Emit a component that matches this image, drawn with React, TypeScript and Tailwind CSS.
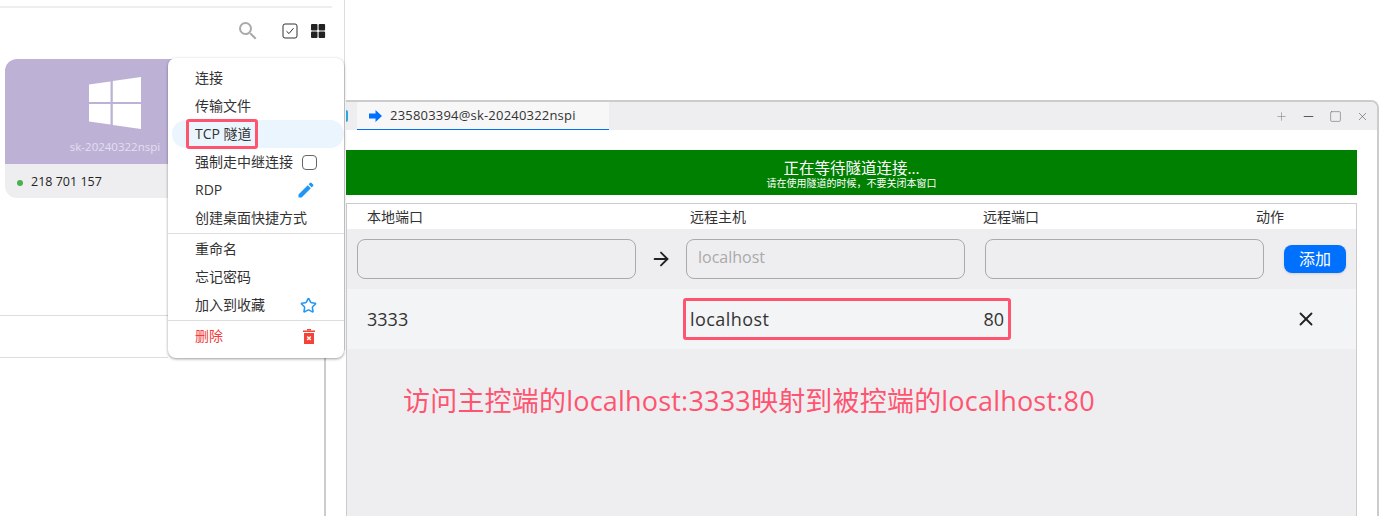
import React from 'react';
import { Plus, Minus, Square, X, ArrowRight, Star } from 'lucide-react';

const FONT = { fontFamily: '"Open Sans", "Noto Sans CJK SC", sans-serif' };

// Context menu item
const MenuItem: React.FC<{ label: string; right?: React.ReactNode; danger?: boolean }> = ({ label, right, danger }) => (
  <div className={`flex items-center justify-between pl-[27px] pr-[22px] h-[28px] text-sm ${danger ? 'text-[#f33c3c]' : 'text-[#333]'}`}>
    <span>{label}</span>
    {right}
  </div>
);

const WindowsLogo = () => (
  <svg width="52" height="52" viewBox="0 0 52 52" fill="white">
    <path d="M0 7.4 L21.5 4.4 V25 H0 Z" />
    <path d="M23.8 4 L52 0 V25 H23.8 Z" />
    <path d="M0 27 H21.5 V47.6 L0 44.6 Z" />
    <path d="M23.8 27 H52 V52 L23.8 48 Z" />
  </svg>
);

const PortInput: React.FC<{ placeholder?: string }> = ({ placeholder }) => (
  <div className="w-[279px] h-10 border border-[#aaa] rounded-lg flex items-center px-[11px] pb-[4px] text-base text-[#aaa]">
    {placeholder}
  </div>
);

export default function App() {
  return (
    <div className="relative w-[1385px] h-[516px] bg-white overflow-hidden" style={FONT}>
      {/* Address book panel */}
      <div className="w-[332px]">
        <div className="h-[8px] border-b-2 border-[#eeeeee]" />
        <div className="h-[51px] flex items-center justify-end pr-[6px] text-[#222]">
          <svg width="24" height="24" viewBox="0 0 24 24" fill="#aaaaaa" className="mr-[22px] mb-[6px]">
            <path d="M15.5 14h-.79l-.28-.27A6.471 6.471 0 0 0 16 9.5 6.5 6.5 0 1 0 9.5 16c1.61 0 3.09-.59 4.23-1.57l.27.28v.79l5 4.99L20.49 19l-4.99-5zm-6 0C7.01 14 5 11.99 5 9.5S7.01 5 9.5 5 14 7.01 14 9.5 11.99 14 9.5 14z" />
          </svg>
          <svg width="16" height="16" viewBox="0 0 16 16" fill="none" className="mr-[12px] mb-[6px]">
            <rect x="1" y="1" width="14" height="14" rx="2" stroke="#333" strokeWidth="1" />
            <path d="M4.5 8.2 L7 10.6 L11.5 5.2" stroke="#333" strokeWidth="1" />
          </svg>
          <svg width="16" height="16" viewBox="0 0 16 16" fill="#222" className="mb-[6px]">
            <rect x="1" y="1" width="6.5" height="6.5" rx="1" />
            <rect x="8.6" y="1" width="6.5" height="6.5" rx="1" />
            <rect x="1" y="8.6" width="6.5" height="6.5" rx="1" />
            <rect x="8.6" y="8.6" width="6.5" height="6.5" rx="1" />
          </svg>
        </div>
        <div className="ml-[5px] w-[220px] h-[139px] rounded-xl overflow-hidden flex flex-col">
          <div className="h-[105px] bg-[#bdb2d6] flex flex-col items-center pt-[18px]">
            <WindowsLogo />
            <span className="text-[11.5px] text-[#e4dfee] mt-[9px]">sk-20240322nspi</span>
          </div>
          <div className="flex-1 bg-[#eeeef0] flex items-center pl-[12px] pt-[3px] text-[12.5px] font-medium text-[#222]">
            <span className="w-[6px] h-[6px] rounded-full bg-[#4caf50] mr-[8px]" />
            218 701 157
          </div>
        </div>
        <div className="mt-[117px] border-t border-[#ddd] h-[43px] w-[168px] border-b" />
      </div>
      <div className="absolute left-[324px] top-[358px] bottom-0 w-[2px] bg-[#ccc]" />
      <div className="absolute left-[344px] top-0 h-[350px] w-px bg-[#ddd]" />

      {/* Tunnel window */}
      <div className="absolute left-[346px] top-[100px] w-[1033px] h-[416px] border-t-2 border-r-2 border-[#cccccc] rounded-tr-lg bg-white flex flex-col overflow-hidden">
        <div className="h-[28px] bg-[#eeeef0] flex items-stretch">
          <div className="w-[2px] h-[12px] mt-[8px] rounded-r-full bg-[#29a8e0] mr-[9px]" />
          <div className="w-[252px] bg-[#f7f7f8] border-b border-[#0071ff] flex items-center pl-[12px] text-[13px] tracking-[0.2px] text-[#333]">
            <svg width="13" height="12" viewBox="0 0 13 12" fill="#0071ff" className="mr-[8px]">
              <path d="M0 3.5 H6.5 V0 L13 6 L6.5 12 V8.5 H0 Z" />
            </svg>
            235803394@sk-20240322nspi
          </div>
          <div className="ml-auto flex items-center text-[#777] pr-[8px]">
            <Plus size={13} strokeWidth={1} />
            <Minus size={15} strokeWidth={1.4} className="text-[#444] ml-[13px]" />
            <Square size={13} strokeWidth={1.2} className="ml-[13px]" />
            <X size={13} strokeWidth={1.1} className="ml-[14px] text-[#555]" />
          </div>
        </div>
        <div className="flex-1 flex flex-col pr-[20px] pt-[20px]">
          <div className="h-[45px] bg-[#008000] text-white flex flex-col items-center pt-[9px] shrink-0">
            <div className="text-[15.5px] leading-[18px]">正在等待隧道连接...</div>
            <div className="text-[10px] leading-[11px] mt-[1px]">请在使用隧道的时候，不要关闭本窗口</div>
          </div>
          <div className="mt-[8px] flex-1 border-t border-l border-r border-[#cccccc] bg-[#eeeef0] flex flex-col text-[#333]">
            <div className="h-[25px] bg-white flex items-center text-sm">
              <span className="ml-[20px] w-[323px]">本地端口</span>
              <span className="w-[293px]">远程主机</span>
              <span className="w-[273px]">远程端口</span>
              <span>动作</span>
            </div>
            <div className="h-[60px] flex items-center pl-[10px]">
              <PortInput />
              <div className="w-[50px] flex justify-center text-[#222]">
                <ArrowRight size={22} strokeWidth={2} />
              </div>
              <PortInput placeholder="localhost" />
              <div className="w-[20px]" />
              <PortInput />
              <div className="ml-[20px] w-[62px] h-[28px] rounded-lg bg-[#0071ff] text-white text-base flex items-center justify-center shadow-sm">
                添加
              </div>
            </div>
            <div className="relative h-[60px] bg-[#f3f4f6] flex items-center text-lg text-[#333]">
              <span className="ml-[20px] w-[323px]">3333</span>
              <span className="w-[314px] flex justify-between">
                <span className="tracking-[0.45px]">localhost</span>
                <span>80</span>
              </span>
              <X size={22} strokeWidth={2} className="ml-[291px] text-[#222]" />
              {/* annotation box */}
              <div className="absolute left-[336px] top-[9px] w-[328px] h-[42px] border-[3px] border-[#ff5470] rounded-[3px]" />
            </div>
            <div className="pl-[56px] pt-[34px] text-[27px] tracking-[0.2px] leading-[36px] text-[#ff5470] whitespace-nowrap">
              访问主控端的localhost:3333映射到被控端的localhost:80
            </div>
          </div>
        </div>
      </div>

      {/* Context menu */}
      <div className="absolute left-[168px] top-[58px] w-[176px] h-[300px] bg-white rounded-lg shadow-[0_1px_3px_rgba(0,0,0,0.4)] flex flex-col pt-[6px]">
        <MenuItem label="连接" />
        <MenuItem label="传输文件" />
        <div className="relative h-[28px] ml-[4px] bg-[#ebf5fe] rounded-full flex items-center pl-[23px] text-sm text-[#333]">
          TCP 隧道
          <div className="absolute left-[14px] top-[-1px] w-[72px] h-[30px] border-[3px] border-[#ff5470] rounded-[3px]" />
        </div>
        <MenuItem
          label="强制走中继连接"
          right={<span className="w-[15px] h-[15px] border-[1.5px] border-[#666] rounded-[4px] mr-[5px] shrink-0" />}
        />
        <MenuItem
          label="RDP"
          right={
            <svg width="20" height="20" viewBox="0 0 24 24" fill="#2196f3" className="mr-[6px]">
              <path d="M3 17.25V21h3.75L17.81 9.94l-3.75-3.75L3 17.25zM20.71 7.04a1 1 0 0 0 0-1.41l-2.34-2.34a1 1 0 0 0-1.41 0l-1.83 1.83 3.75 3.75 1.83-1.83z" />
            </svg>
          }
        />
        <MenuItem label="创建桌面快捷方式" />
        <div className="h-px bg-[#ddd] my-[1px]" />
        <MenuItem label="重命名" />
        <MenuItem label="忘记密码" />
        <MenuItem label="加入到收藏" right={<Star size={17} strokeWidth={2.2} className="text-[#2196f3] mr-[5px]" />} />
        <div className="h-px bg-[#ddd] my-[1px]" />
        <MenuItem
          label="删除"
          danger
          right={
            <svg width="12" height="15" viewBox="0 0 12 15" className="mr-[7px]" fill="#f44336">
              <rect x="0" y="1.5" width="12" height="1.5" />
              <rect x="4" y="0" width="4" height="1.5" />
              <path d="M1 4 H11 V15 H1 Z" />
              <path d="M4.2 7.5 L7.8 11 M7.8 7.5 L4.2 11" stroke="white" strokeWidth="1.4" />
            </svg>
          }
        />
      </div>
    </div>
  );
}
